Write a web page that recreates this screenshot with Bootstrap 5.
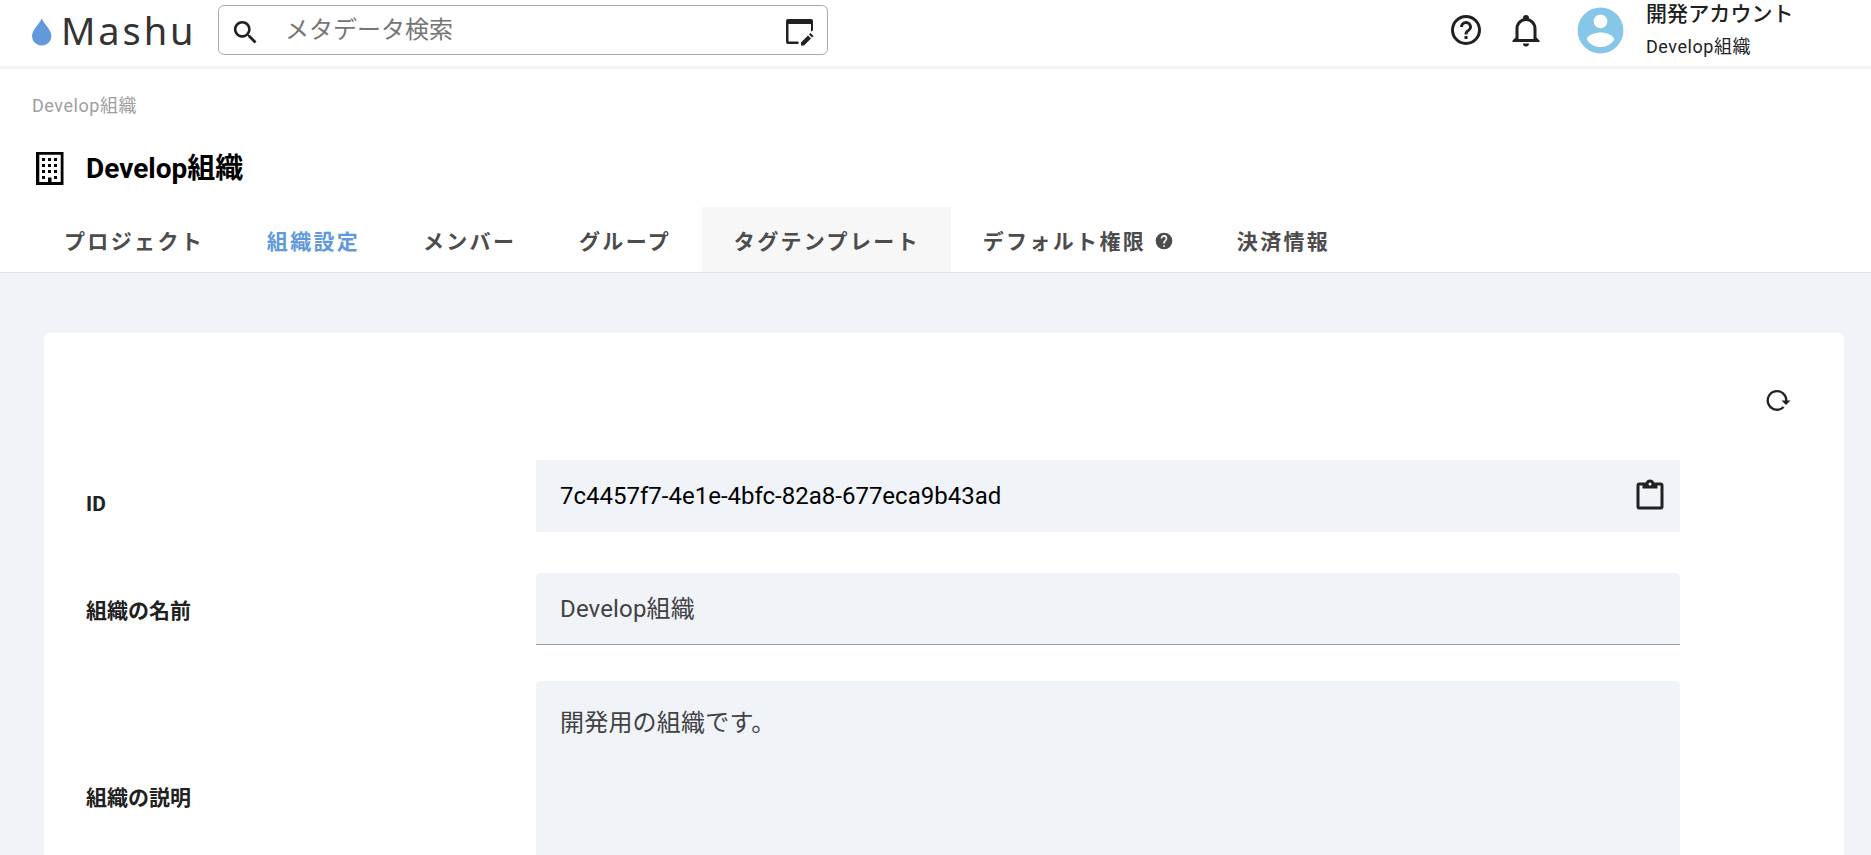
<!DOCTYPE html>
<html lang="ja">
<head>
<meta charset="utf-8">
<title>Mashu</title>
<link href="https://cdn.jsdelivr.net/npm/bootstrap@5.3.0/dist/css/bootstrap.min.css" rel="stylesheet">
<style>
body{font-family:Roboto,"Noto Sans CJK JP",sans-serif;color:#212121;background:#f0f4f9}
svg{fill:#212121;display:block;flex:none}
.topbar{height:69px;border-bottom:3px solid #f0f4f9;padding:0 0 6px 32px;background:#fff}
.drop{width:20px;height:28px;margin-top:3px;fill:#6199dc}
.brand-word{font:38px/1 "Noto Sans",sans-serif;letter-spacing:2.9px;color:#333;margin-left:9px;width:157px}
.search{width:610px;height:50px;border:1px solid #aaa;border-radius:6px;padding:0 9px 0 11px;font-size:24px;color:#757575}
.search svg{margin-top:4px}
.search .hint{margin-left:24px}
.bell{margin-left:24px}
.avatar{margin-left:29px;fill:#86c6e8}
.account{width:225px;margin-left:18px}
.account .who{font-size:21px;line-height:30px;font-weight:500;letter-spacing:.1px}
.account .org{font-size:18px;line-height:30px;letter-spacing:.55px;margin-top:3px}
.heading{background:#fff;height:204px;border-bottom:1px solid #e0e2e5}
.crumb{font-size:18px;letter-spacing:.55px;line-height:28px;color:#9e9e9e;padding:23px 0 0 32px}
.org-title{font-size:28px;font-weight:700;color:#000;height:44px;margin:26px 0 0 30px}
.org-title svg{fill:#000}
.org-title span{margin:2px 0 0 16px}
.tabs{height:65px;margin-top:17px;padding-left:32px}
.tabs a{padding:6px 30.7px 0 32px;height:65px;font-size:21px;font-weight:700;letter-spacing:2.35px;color:#4c4c4c;text-decoration:none}
.tabs a.current{color:#6199dc}
.tabs a.hovered{background:#f7f7f7}
.tabs svg{fill:#4c4c4c;margin-left:8px;margin-top:-3px}
.panel{background:#fff;border-radius:6px 6px 0 0;margin:60px 27px 0 44px;height:522px;padding:52px 0 0 42px}
.reload{margin-left:1676px}
.grid-form{display:grid;grid-template-columns:450px 1144px;grid-template-rows:72px 41px 72px 36px 174px;margin-top:45px}
.grid-form b{font-size:21px;line-height:30px;align-self:center}
.field{background:#f0f4f9;font-size:24px;color:#424242;padding:0 12px 0 24px}
.row-id{color:#000}
.row-name{border-bottom:1px solid #999da3;border-radius:5px 5px 0 0;letter-spacing:.15px}
.row-text{border-radius:5px 5px 0 0;padding-top:24px;letter-spacing:.2px}
.gap-line{grid-column:1/3}
.label-text{margin-bottom:42px}
</style>
</head>
<body>
<header class="topbar d-flex align-items-center">
<svg class="drop" viewBox="0 0 20 28"><path d="M9.700 0.500C7.500 6 0 12 0 18a9.700 9.500 0 0 0 19.400 0C19.400 12 12 6 9.700 .500Z"/></svg>
<div class="brand-word">Mashu</div>
<div class="search d-flex align-items-center">
<svg width="31" height="31" viewBox="0 0 24 24"><path d="M9.500 3A6.500 6.500 0 0 1 16 9.500C16 11.110 15.410 12.590 14.440 13.730L14.710 14H15.500L20.500 19L19 20.500L14 15.500V14.710L13.730 14.440A6.500 6.500 0 1 1 9.500 3M9.500 5a4.500 4.500 0 1 0 0 9a4.500 4.500 0 0 0 0-9Z"/></svg>
<span class="hint">メタデータ検索</span>
<svg class="ms-auto" width="36" height="36" viewBox="0 0 36 36"><path d="M4 7a2 2 0 0 1 2-2H29a2 2 0 0 1 2 2V16.500l-2 1V10H6.500V27.500H16.500V30H6a2 2 0 0 1-2-2ZM19 28.500v3h3L29 24.500l-3-3ZM27 20.500l3 3 1.500-1.500-3-3Z"/></svg>
</div>
<svg class="ms-auto" width="36" height="36" viewBox="0 0 24 24"><path d="M11 18h2v-2h-2zM12 2a10 10 0 1 0 0 20a10 10 0 0 0 0-20m0 18a8 8 0 1 1 0-16a8 8 0 0 1 0 16m0-14a4 4 0 0 0-4 4h2a2 2 0 0 1 4 0c0 2-3 1.750-3 5h2c0-2.250 3-2.500 3-5a4 4 0 0 0-4-4"/></svg>
<svg class="bell" width="36" height="36" viewBox="0 0 24 24"><path d="M10 21h4a2 2 0 0 1-4 0m11-2v1H3v-1l2-2v-6c0-3.100 2-5.830 5-6.710V4a2 2 0 0 1 4 0v.290c3 .880 5 3.610 5 6.710v6zm-4-8a5 5 0 0 0-10 0v7h10z"/></svg>
<svg class="avatar" width="55" height="55" viewBox="0 0 24 24"><path d="M12 19.200c-2.500 0-4.710-1.280-6-3.200.030-2 4-3.100 6-3.100s5.970 1.100 6 3.100a7.230 7.230 0 0 1-6 3.200M12 5a3 3 0 1 1 0 6a3 3 0 0 1 0-6m0-3a10 10 0 1 0 0 20a10 10 0 0 0 0-20"/></svg>
<div class="account"><div class="who">開発アカウント</div><div class="org">Develop組織</div></div>
</header>
<section class="heading">
<div class="crumb">Develop組織</div>
<div class="org-title d-flex align-items-center"><svg width="40" height="40" viewBox="0 0 40 40"><path d="M6 4H33.500V37H6ZM9.300 6.700V34H18V29.500H21.500V34H30.700V6.700Z"/><path d="M12 10h3v3h-3zm6 0h3v3h-3zm6 0h3v3h-3zM12 16h3v3h-3zm6 0h3v3h-3zm6 0h3v3h-3zM12 22h3v3h-3zm6 0h3v3h-3zm6 0h3v3h-3zM12 28h3v3h-3zm12 0h3v3h-3z"/></svg><span>Develop組織</span></div>
<nav class="tabs d-flex">
<a class="d-flex align-items-center" href="#">プロジェクト</a>
<a class="d-flex align-items-center current" href="#">組織設定</a>
<a class="d-flex align-items-center" href="#">メンバー</a>
<a class="d-flex align-items-center" href="#">グループ</a>
<a class="d-flex align-items-center hovered" href="#">タグテンプレート</a>
<a class="d-flex align-items-center" href="#">デフォルト権限<svg width="20" height="20" viewBox="0 0 24 24"><path d="M15.070 11.250l-.900.920C13.450 12.890 13 13.500 13 15h-2v-.500c0-1.110.450-2.110 1.170-2.830l1.240-1.260A2 2 0 1 0 10 9H8a4 4 0 1 1 7.070 2.250M13 19h-2v-2h2M12 2a10 10 0 1 0 0 20a10 10 0 0 0 0-20"/></svg></a>
<a class="d-flex align-items-center" href="#">決済情報</a>
</nav>
</section>
<main class="panel">
<svg class="reload" width="30" height="30" viewBox="0 0 30 30"><path d="M24.300 16A9.300 9.300 0 1 0 21.600 22" fill="none" stroke="#212121" stroke-width="2.300"/><path d="M19.500 15.500h9l-4.500 4.500z"/></svg>
<div class="grid-form">
<b class="mt-3">ID</b>
<div class="field row-id d-flex align-items-center justify-content-between">7c4457f7-4e1e-4bfc-82a8-677eca9b43ad
<svg width="36" height="36" viewBox="0 0 24 24"><path d="M19 3H14.820C14.400 1.840 13.300 1 12 1S9.600 1.840 9.180 3H5A2 2 0 0 0 3 5V19A2 2 0 0 0 5 21H19A2 2 0 0 0 21 19V5A2 2 0 0 0 19 3M12 3A1 1 0 1 1 12 5A1 1 0 0 1 12 3M7 7H17V5H19V19H5V5H7Z"/></svg></div>
<div class="gap-line"></div>
<b class="mt-1">組織の名前</b>
<div class="field row-name d-flex align-items-center">Develop組織</div>
<div class="gap-line"></div>
<b class="align-self-end label-text">組織の説明</b>
<div class="field row-text">開発用の組織です。</div>
</div>
</main>
<script src="https://cdn.jsdelivr.net/npm/bootstrap@5.3.0/dist/js/bootstrap.bundle.min.js"></script>
</body>
</html>
